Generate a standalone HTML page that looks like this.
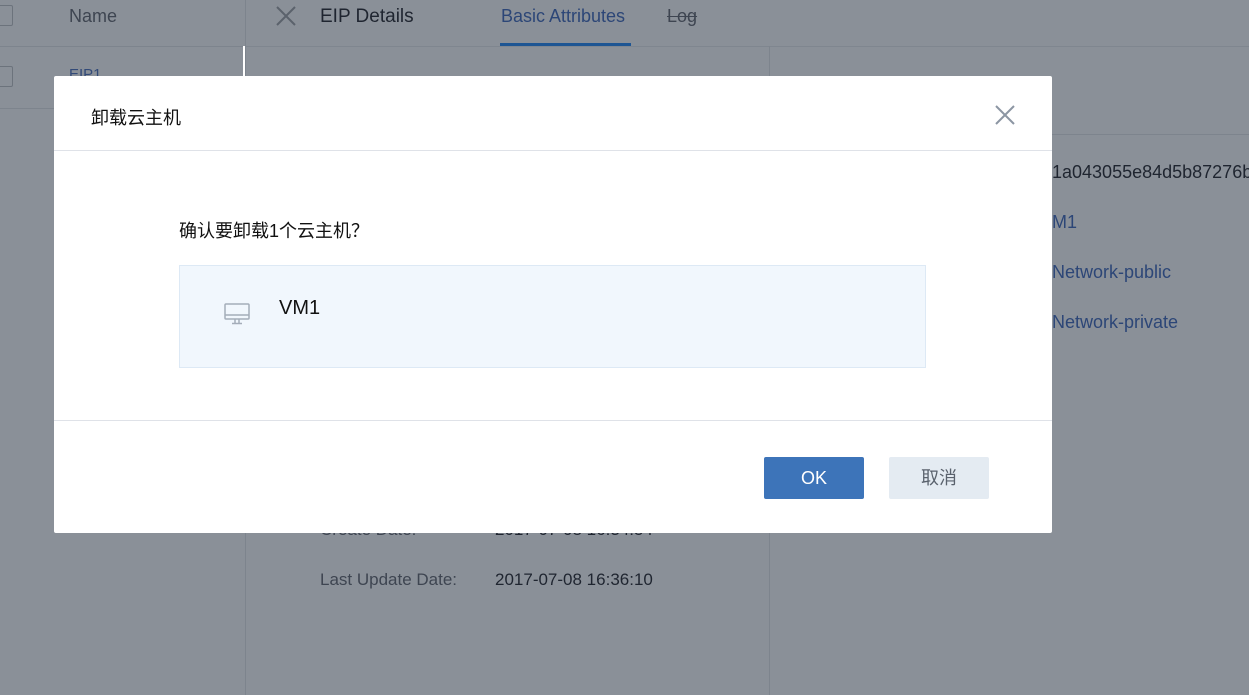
<!DOCTYPE html><html><head><meta charset="utf-8"><style>
*{margin:0;padding:0;box-sizing:border-box}
body{width:1249px;height:695px;background:#8a9098;position:relative;overflow:hidden;font-family:"Liberation Sans","Noto Sans CJK SC",sans-serif}
.a{position:absolute}
</style></head><body>
<div class="a" style="left:0;top:46px;width:245px;height:1px;background:#7d848d"></div>
<div class="a" style="left:245px;top:0;width:1px;height:695px;background:#7d848d"></div>
<div class="a" style="left:245px;top:46px;width:1004px;height:1px;background:#7f868f"></div>
<div class="a" style="left:769px;top:46px;width:1px;height:649px;background:#7d848d"></div>
<div class="a" style="left:770px;top:134px;width:479px;height:1px;background:#7d848d"></div>
<div class="a" style="left:0;top:108px;width:245px;height:1px;background:#7d848d"></div>
<div class="a" style="left:243px;top:46px;width:2px;height:30px;background:#fff"></div>
<div class="a" style="left:-8px;top:5px;width:21px;height:21px;border:1px solid #6c737c;border-radius:2px"></div>
<div class="a" style="left:-8px;top:66px;width:21px;height:21px;border:1px solid #6c737c;border-radius:2px"></div>
<div class="a" style="left:69px;top:6px;font-size:18px;color:#3e4551">Name</div>
<div class="a" style="left:69px;top:66px;font-size:15px;color:#324a78">EIP1</div>
<svg class="a" style="left:276px;top:6px" width="20" height="20"><path d="M1 1L19 19M19 1L1 19" stroke="#5b626c" stroke-width="2"/></svg>
<div class="a" style="left:320px;top:6px;font-size:19px;color:#1f2530">EIP Details</div>
<div class="a" style="left:501px;top:6px;font-size:18px;color:#2c4677">Basic Attributes</div>
<div class="a" style="left:500px;top:43px;width:131px;height:3px;background:#1d5593"></div>
<div class="a" style="left:667px;top:6px;font-size:18px;color:#3e4551;text-decoration:line-through">Log</div>
<div class="a" style="left:1052px;top:162px;font-size:18px;color:#1f2530">1a043055e84d5b87276b</div>
<div class="a" style="left:1052px;top:212px;font-size:18px;color:#2c4677">M1</div>
<div class="a" style="left:1052px;top:262px;font-size:18px;color:#2c4677">Network-public</div>
<div class="a" style="left:1052px;top:312px;font-size:18px;color:#2c4677">Network-private</div>
<div class="a" style="left:320px;top:570px;font-size:17px;color:#3e4551">Last Update Date:</div>
<div class="a" style="left:495px;top:570px;font-size:17px;color:#1f2530">2017-07-08 16:36:10</div>
<div class="a" style="left:320px;top:520px;font-size:17px;color:#3e4551">Create Date:</div>
<div class="a" style="left:495px;top:520px;font-size:17px;color:#1f2530">2017-07-08 16:34:54</div>
<div class="a" style="left:54px;top:76px;width:998px;height:457px;background:#fff;border-radius:2px">
<div class="a" style="left:37px;top:28px;font-size:18px;color:#111">卸载云主机</div>
<svg class="a" style="left:940px;top:28px" width="22" height="22"><path d="M2 2L20 20M20 2L2 20" stroke="#8c96a3" stroke-width="2"/></svg>
<div class="a" style="left:0;top:74px;width:998px;height:1px;background:#dfe2e8"></div>
<div class="a" style="left:125px;top:141px;font-size:18px;color:#111">确认要卸载1个云主机？</div>
<div class="a" style="left:125px;top:189px;width:747px;height:103px;background:#f1f7fd;border:1px solid #dde9f5"></div>
<svg class="a" style="left:170px;top:227px" width="26" height="22"><rect x="1" y="1" width="24" height="15" rx="1" fill="none" stroke="#a4adb9" stroke-width="1.5"/><path d="M1 12H25M11 16V20M15 16V20M8 20.5H18" stroke="#a4adb9" stroke-width="1.5"/></svg>
<div class="a" style="left:225px;top:221px;font-size:20px;color:#111">VM1</div>
<div class="a" style="left:0;top:344px;width:998px;height:1px;background:#dfe2e8"></div>
<div class="a" style="left:710px;top:381px;width:100px;height:42px;background:#3d74b9;border-radius:2px;color:#fff;font-size:18px;text-align:center;line-height:42px">OK</div>
<div class="a" style="left:835px;top:381px;width:100px;height:42px;background:#e4ebf2;border-radius:2px;color:#5a626d;font-size:18px;text-align:center;line-height:42px">取消</div>
</div>
</body></html>
